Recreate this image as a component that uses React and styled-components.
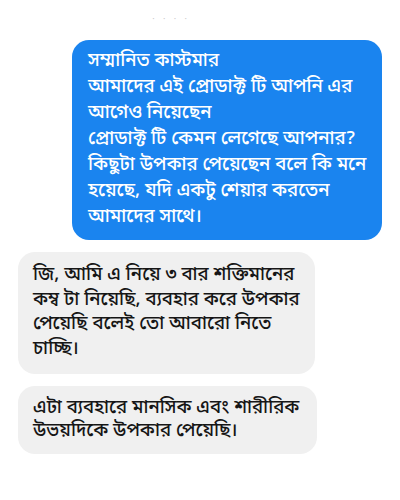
import React from 'react';
import styled, { createGlobalStyle } from 'styled-components';

const GlobalStyle = createGlobalStyle`
  html, body {
    margin: 0;
    padding: 0;
    background: #ffffff;
  }

  body {
    font-family: 'Noto Sans Bengali', 'Noto Sans', 'Liberation Sans', sans-serif;
  }
`;

const StyledThread = styled.div`
  width: 400px;
  height: 500px;
  overflow: hidden;
  display: flex;
  flex-direction: column;
  padding-top: 12px;
  box-sizing: border-box;
`;

const StyledStamp = styled.div`
  align-self: center;
  margin-left: -58px;
  height: 16px;
  line-height: 16px;
  font-size: 9px;
  letter-spacing: 3px;
  color: #cccccc;
  margin-bottom: 12px;
`;

const StyledRow = styled.div`
  display: flex;
  justify-content: ${props => (props.mine ? 'flex-end' : 'flex-start')};
  padding: ${props => (props.mine ? '0 18px 0 0' : '0 0 0 18px')};
  margin-bottom: ${props => props.gap || 0}px;
`;

const StyledBubble = styled.div`
  width: ${props => props.width}px;
  box-sizing: border-box;
  padding: ${props => props.pad};
  border-radius: 17px;
  background: ${props => (props.mine ? '#1a84ef' : '#f0f0f0')};
  color: ${props => (props.mine ? '#ffffff' : '#161616')};
  font-size: 18.6px;
  font-weight: 500;
  line-height: ${props => props.lh}px;
`;

const StyledLine = styled.span`
  display: block;
  white-space: nowrap;
`;

const sent = [
  'সম্মানিত কাস্টমার',
  'আমাদের এই প্রোডাক্ট টি আপনি এর',
  'আগেও নিয়েছেন',
  'প্রোডাক্ট টি কেমন লেগেছে আপনার?',
  'কিছুটা উপকার পেয়েছেন বলে কি মনে',
  'হয়েছে, যদি একটু শেয়ার করতেন',
  'আমাদের সাথে।'
];

const reply1 = [
  'জি, আমি এ নিয়ে ৩ বার শক্তিমানের',
  'কম্ব টা নিয়েছি, ব্যবহার করে উপকার',
  'পেয়েছি বলেই তো আবারো নিতে',
  'চাচ্ছি।'
];

const reply2 = ['এটা ব্যবহারে মানসিক এবং শারীরিক', 'উভয়দিকে উপকার পেয়েছি।'];

const App = () => (
  <StyledThread>
    <GlobalStyle />
    <StyledStamp>· · · ·</StyledStamp>

    <StyledRow mine gap={12}>
      <StyledBubble mine width={310} pad="9px 12px 9px 16px" lh={26}>
        {sent.map((line, i) => (
          <StyledLine key={i}>{line}</StyledLine>
        ))}
      </StyledBubble>
    </StyledRow>

    <StyledRow gap={12}>
      <StyledBubble width={297} pad="12px 8px 12px 15px" lh={24.5}>
        {reply1.map((line, i) => (
          <StyledLine key={i}>{line}</StyledLine>
        ))}
      </StyledBubble>
    </StyledRow>

    <StyledRow>
      <StyledBubble width={299} pad="11px 8px 11px 15px" lh={23}>
        {reply2.map((line, i) => (
          <StyledLine key={i}>{line}</StyledLine>
        ))}
      </StyledBubble>
    </StyledRow>
  </StyledThread>
);

export default App;
